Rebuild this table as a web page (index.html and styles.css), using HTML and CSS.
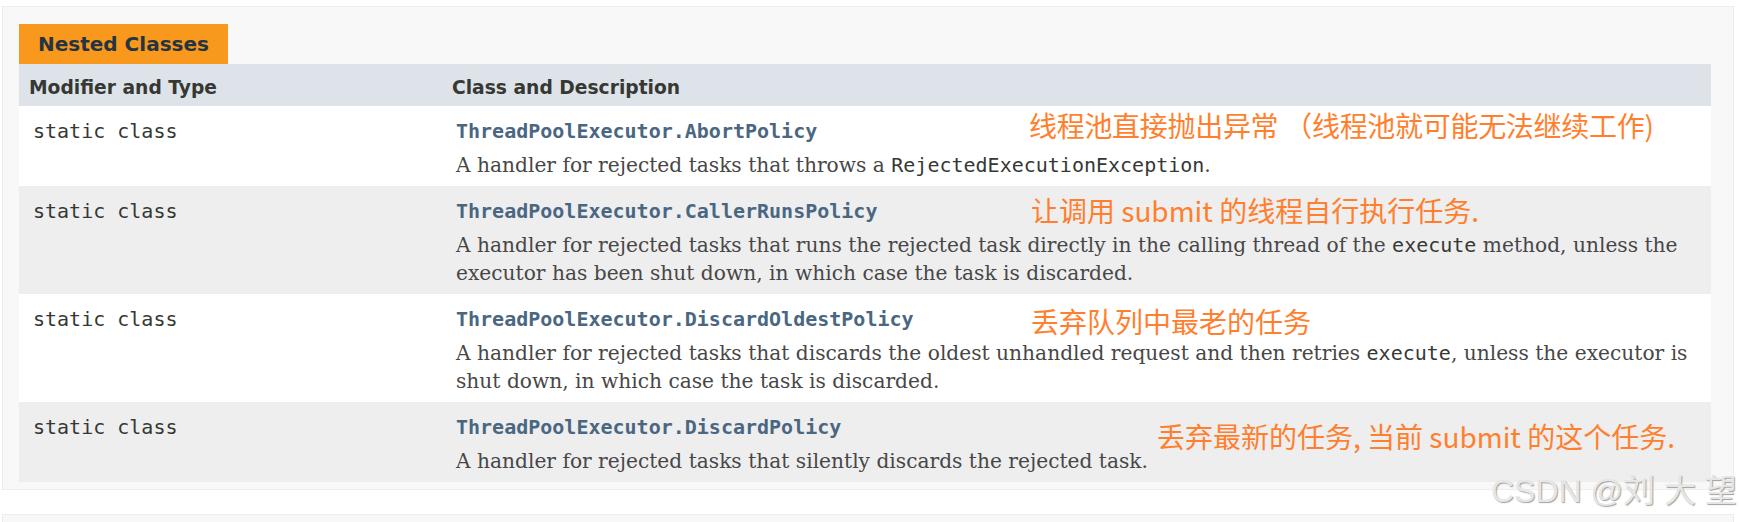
FILE: index.html
```html
<!DOCTYPE html>
<html lang="en">
<head>
<meta charset="utf-8">
<title>Nested Classes</title>
<link rel="stylesheet" href="styles.css">
</head>
<body>
<div class="page">
  <section class="summary">
    <div class="caption">Nested Classes</div>
    <table class="members">
      <colgroup><col class="col-type"><col class="col-desc"></colgroup>
      <thead>
        <tr><th>Modifier and Type</th><th>Class and Description</th></tr>
      </thead>
      <tbody>
        <tr class="row-alt">
          <td class="first"><code>static class</code></td>
          <td class="last"><code><a class="link">ThreadPoolExecutor.AbortPolicy</a></code>
            <div class="block">A handler for rejected tasks that throws a <code>RejectedExecutionException</code>.</div>
            <span class="note note-1">线程池直接抛出异常 （线程池就可能无法继续工作)</span>
          </td>
        </tr>
        <tr class="row-gray">
          <td class="first"><code>static class</code></td>
          <td class="last"><code><a class="link">ThreadPoolExecutor.CallerRunsPolicy</a></code>
            <div class="block">A handler for rejected tasks that runs the rejected task directly in the calling thread of the <code>execute</code> method, unless the executor has been shut down, in which case the task is discarded.</div>
            <span class="note note-2">让调用 submit 的线程自行执行任务.</span>
          </td>
        </tr>
        <tr class="row-alt">
          <td class="first"><code>static class</code></td>
          <td class="last"><code><a class="link">ThreadPoolExecutor.DiscardOldestPolicy</a></code>
            <div class="block">A handler for rejected tasks that discards the oldest unhandled request and then retries <code>execute</code>, unless the executor is shut down, in which case the task is discarded.</div>
            <span class="note note-3">丢弃队列中最老的任务</span>
          </td>
        </tr>
        <tr class="row-gray">
          <td class="first"><code>static class</code></td>
          <td class="last"><code><a class="link">ThreadPoolExecutor.DiscardPolicy</a></code>
            <div class="block">A handler for rejected tasks that silently discards the rejected task.</div>
            <span class="note note-4">丢弃最新的任务, 当前 submit 的这个任务.</span>
          </td>
        </tr>
      </tbody>
    </table>
  </section>
  <section class="summary-next"></section>
  <div class="watermark">CSDN @刘 大 望</div>
</div>
</body>
</html>
```
FILE: styles.css
```css
html, body {
  margin: 0;
  padding: 0;
  background: #ffffff;
}
.page {
  position: relative;
  width: 1739px;
  height: 522px;
  overflow: hidden;
  padding-top: 6px;
  box-sizing: border-box;
}
.summary {
  margin: 0 5px 0 2px;
  border: 1px solid #ededed;
  background: #f8f8f8;
  padding: 17px 22px 7px 16px;
}
.caption {
  width: max-content;
  height: 40px;
  line-height: 40px;
  padding: 0 19px;
  background: #f8981d;
  color: #253441;
  font-family: "DejaVu Sans", sans-serif;
  font-weight: bold;
  font-size: 20px;
  white-space: nowrap;
}
.members {
  width: 1692px;
  table-layout: fixed;
  border-collapse: collapse;
  border-spacing: 0;
}
.col-type { width: 423px; }
.members th {
  background: #dee3e9;
  text-align: left;
  padding: 10px 4px 5px 10px;
  line-height: 27px;
  font-family: "DejaVu Sans", sans-serif;
  font-weight: bold;
  font-size: 18.7px;
  color: #353833;
  white-space: nowrap;
}
.members td {
  vertical-align: top;
  padding: 11px 4px 3px 14px;
  line-height: 29px;
}
.members td.last {
  position: relative;
}
.row-alt { background: #ffffff; }
.row-gray { background: #eeeeef; }
code {
  font-family: "DejaVu Sans Mono", monospace;
  font-size: 20px;
  color: #353833;
}
.link {
  color: #4a6782;
  font-weight: bold;
}
.block {
  margin: 4px 14px 4px 0;
  line-height: 28px;
  font-family: "DejaVu Serif", serif;
  font-size: 20.2px;
  color: #474747;
}
.block code {
  font-size: 20px;
  color: #353833;
}
.note {
  position: absolute;
  white-space: nowrap;
  font-family: "Noto Sans CJK SC", "Noto Sans", sans-serif;
  font-size: 28px;
  line-height: 34px;
  color: #ff7f2e;
}
.note-1 { left: 587px; top: 2px; letter-spacing: -0.3px; }
.note-2 { left: 589px; top: 7px; }
.note-3 { left: 589px; top: 10px; }
.note-4 { left: 715px; top: 17px; }
.summary-next {
  margin: 24px 5px 0 2px;
  height: 60px;
  border: 1px solid #ededed;
  background: #f8f8f8;
}
.watermark {
  position: absolute;
  left: 1491px;
  top: 473px;
  white-space: nowrap;
  font-family: "Liberation Sans", "Noto Sans CJK SC", sans-serif;
  font-size: 32px;
  line-height: 36px;
  color: #e6e6e6;
  text-shadow: 1px 1px 1px #a0a0a0;
}
```
